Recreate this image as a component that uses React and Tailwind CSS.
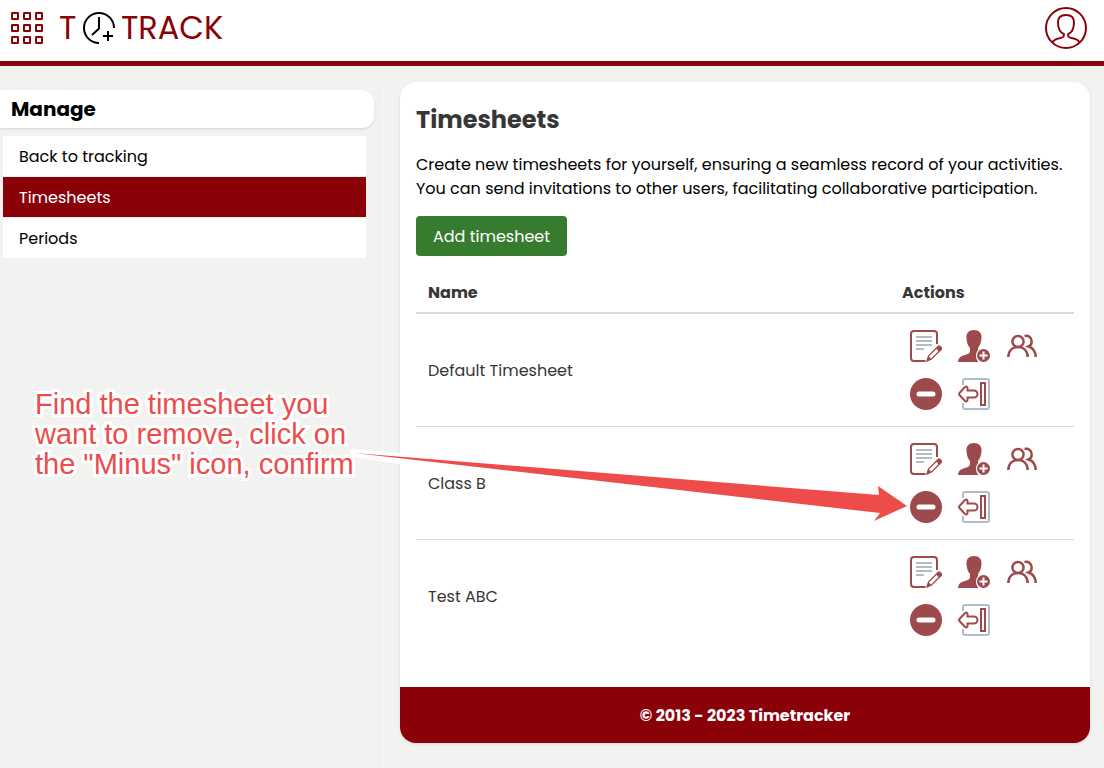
const timesheets = ['Default Timesheet', 'Class B', 'Test ABC'];

const menu = [
  { label: 'Back to tracking', active: false },
  { label: 'Timesheets', active: true },
  { label: 'Periods', active: false },
];

function GridIcon() {
  const cells = [0, 12, 24];
  return (
    <svg width="32" height="32" viewBox="0 0 32 32" fill="none" stroke="#8a0108" strokeWidth="2" aria-hidden="true">
      {cells.map((y) => cells.map((x) => <rect key={`${x}-${y}`} x={x + 1} y={y + 1} width="6" height="6" rx="0.2" />))}
    </svg>
  );
}

function ClockIcon() {
  return (
    <svg width="32" height="32" viewBox="0 0 32 32" fill="none" stroke="#000" strokeWidth="2" aria-hidden="true">
      <path d="M16 31A15 15 0 1 1 31 16" />
      <path d="M16 5v11.500l-7 6.500" />
      <path d="M25 19v10M20 24h10" />
    </svg>
  );
}

function UserIcon() {
  return (
    <svg width="42" height="42" viewBox="0 0 42 42" fill="none" stroke="#8a0108" strokeWidth="2" aria-hidden="true">
      <circle cx="21" cy="21" r="20" />
      <path d="M7.500 35.500c1.500-3 4-3.700 7-4.200c3.500-.6 4.800-1.800 4.300-4.300c-3.800-1.500-5.600-5.500-5.800-11c-.3-5.500 2.500-8 8-8s8.300 2.500 8 8c-.2 5.500-2 9.500-5.800 11c-.5 2.500.8 3.700 4.300 4.300c3 .5 5.500 1.200 7 4.200" />
    </svg>
  );
}

function EditIcon() {
  return (
    <svg width="32" height="32" viewBox="0 0 32 32" fill="none" aria-hidden="true">
      <path d="M15.500 31H4a3 3 0 0 1-3-3V4a3 3 0 0 1 3-3h20a3 3 0 0 1 3 3v10" stroke="#9d4a4d" strokeWidth="2" />
      <path d="M6 7h16M6 11h16M6 15h16M6 19h8" stroke="#aebdc7" strokeWidth="2" />
      <path d="M17 31l1.500-5L28 16.500a1.500 1.500 0 0 1 2 0l1 1a1.500 1.500 0 0 1 0 2L21.500 29L17 31Z" stroke="#9d4a4d" strokeWidth="1.300" />
      <path d="M26 18.500l3.500 3.500l2-2.500a1.500 1.500 0 0 0 0-2l-1-1a1.500 1.500 0 0 0-2 0ZM18.500 26l3 3l-5 2.500Z" fill="#9d4a4d" />
    </svg>
  );
}

function AddUserIcon() {
  return (
    <svg width="32" height="32" viewBox="0 0 32 32" aria-hidden="true">
      <path
        fill="#9d4a4d"
        d="M16 0c5 0 8 3 7.500 8c-.3 4.500-1.800 8-3.500 10v2c-1 1.500-2 3-2 5.500c0 3 1 5 2.500 6.500H0c.2-3 1.500-5 4-6c4-1.500 7.500-2 8-4.500V18c-2-2-3.300-5.500-3.500-10C8 3 11 0 16 0Z"
      />
      <circle cx="25.500" cy="25.500" r="6.500" fill="#9d4a4d" />
      <path d="M25.500 21.500v8M21.500 25.500h8" stroke="#fff" strokeWidth="2" />
    </svg>
  );
}

function UsersIcon() {
  return (
    <svg width="32" height="32" viewBox="0 0 32 32" fill="none" stroke="#9d4a4d" strokeWidth="2.500" aria-hidden="true">
      <circle cx="12" cy="11.500" r="5.600" />
      <path d="M2.300 27c.2-6.300 4.200-10 9.700-10s9.500 3.700 9.700 10" />
      <path d="M18.500 6c4.200-.8 7.200 1.800 7.200 5.400c0 2.300-1.400 4.300-3.200 5.100c4.300 1.200 7 4.800 7.200 10.500" />
    </svg>
  );
}

function RemoveIcon() {
  return (
    <svg width="32" height="32" viewBox="0 0 32 32" aria-hidden="true">
      <circle cx="16" cy="16" r="16" fill="#9d4a4d" />
      <path d="M9 16h14" stroke="#fff" strokeWidth="5" strokeLinecap="round" />
    </svg>
  );
}

function LeaveIcon() {
  return (
    <svg width="32" height="32" viewBox="0 0 32 32" fill="none" strokeWidth="2" aria-hidden="true">
      <path d="M5 7V3a2 2 0 0 1 2-2h22a2 2 0 0 1 2 2v26a2 2 0 0 1-2 2H7a2 2 0 0 1-2-2v-4" stroke="#aebdc7" />
      <rect x="23" y="5" width="4" height="22" stroke="#9d4a4d" />
      <path
        d="M1.500 15l5.500-6c1-.8 2.500-.3 2.500 1v2.500h6.500a3.500 3.500 0 0 1 0 7H9.500V22c0 1.300-1.500 1.800-2.500 1l-5.500-6a1.400 1.400 0 0 1 0-2Z"
        stroke="#9d4a4d"
      />
    </svg>
  );
}

const actions = [
  { label: 'Edit', Icon: EditIcon },
  { label: 'Invite user', Icon: AddUserIcon },
  { label: 'Members', Icon: UsersIcon },
  { label: 'Remove', Icon: RemoveIcon },
  { label: 'Leave', Icon: LeaveIcon },
];

function Header() {
  return (
    <header className="flex h-[66px] items-start justify-between border-b-[5px] border-[#8a0108] bg-white pr-[17px] pl-[11px]">
      <div className="flex items-center pt-2">
        <button type="button" aria-label="Menu" className="mr-4">
          <GridIcon />
        </button>
        <a href="#" className="flex h-10 items-center gap-1 text-[32px] leading-10 text-[#8a0108]">
          <span className="w-5">T</span>
          <ClockIcon />
          <span className="ml-[2px]">TRACK</span>
        </a>
      </div>
      <button type="button" aria-label="Account" className="mt-[7px]">
        <UserIcon />
      </button>
    </header>
  );
}

function Sidebar() {
  return (
    <aside className="mt-4 mr-4 w-[384px] shrink-0 border-r border-[#f6f6f5] pt-2">
      <h2 className="mr-[9px] rounded-r-xl bg-white pl-[11px] text-xl leading-[38px] font-bold text-black shadow">Manage</h2>
      <nav className="mt-2 mr-[17px] ml-[3px] flex flex-col gap-px">
        {menu.map((item) => (
          <a
            key={item.label}
            href="#"
            className={
              item.active ? 'bg-[#8a0108] px-4 pt-[9px] pb-[7px] text-white' : 'bg-white px-4 pt-[9px] pb-[7px] text-black'
            }
          >
            {item.label}
          </a>
        ))}
      </nav>
    </aside>
  );
}

function TimesheetTable() {
  return (
    <table className="mt-4 w-full border-collapse text-left text-[#363636]">
      <thead>
        <tr className="border-b-2 border-[#dbdbdb]">
          <th className="px-3 pt-[9px] pb-[7px] font-bold">Name</th>
          <th className="w-[184px] px-3 pt-[9px] pb-[7px] font-bold">Actions</th>
        </tr>
      </thead>
      <tbody>
        {timesheets.map((name) => (
          <tr key={name} className="border-b border-[#dbdbdb] last:border-b-0">
            <td className="px-3 pt-[9px] pb-[7px]">{name}</td>
            <td className="px-3 py-2">
              <div className="flex flex-wrap">
                {actions.map(({ label, Icon }) => (
                  <button key={label} type="button" aria-label={`${label}: ${name}`} className="p-2">
                    <Icon />
                  </button>
                ))}
              </div>
            </td>
          </tr>
        ))}
      </tbody>
    </table>
  );
}

function Annotation() {
  return (
    <div className="pointer-events-none absolute inset-0">
      <svg className="absolute top-[440px] left-[350px]" width="570" height="90" viewBox="0 0 570 90" aria-hidden="true">
        <path d="M4 13L50 17L50 20Z" stroke="#fff" strokeWidth="8" strokeLinejoin="round" />
        <path d="M4 13L529 55L528 46L557 66L524 81L530 73Z" fill="#ed4c4b" />
      </svg>
      <p className="absolute top-[389px] left-[35px] font-['Liberation_Sans',sans-serif] text-[29px] leading-[30px] whitespace-nowrap text-[#ed4c4b] [-webkit-text-stroke:6px_white] [paint-order:stroke_fill] [stroke-linejoin:round]">
        Find the timesheet you
        <br />
        want to remove, click on
        <br />
        the "Minus" icon, confirm
      </p>
    </div>
  );
}

export default function App() {
  return (
    <div className="relative min-h-screen bg-[#f2f2f0] font-[Poppins,Inter,sans-serif] text-base">
      <Header />
      <div className="flex min-h-[702px] items-stretch">
        <Sidebar />
        <div className="min-w-0 flex-1 pt-4 pr-[14px] pb-6">
          <div className="overflow-hidden rounded-2xl bg-white shadow">
            <main className="px-4 pt-5 pb-[35px]">
              <h1 className="text-2xl leading-9 font-bold text-[#363636]">Timesheets</h1>
              <p className="mt-[15px] leading-6 text-black">
                Create new timesheets for yourself, ensuring a seamless record of your activities. You can send
                invitations to other users, facilitating collaborative participation.
              </p>
              <button type="button" className="mt-[15px] h-10 rounded bg-[#377b2f] px-[17px] pt-px text-white">
                Add timesheet
              </button>
              <TimesheetTable />
            </main>
            <footer className="bg-[#8a0108] pt-[17px] pb-[15px] text-center font-bold text-white">© 2013 - 2023 Timetracker</footer>
          </div>
        </div>
      </div>
      <Annotation />
    </div>
  );
}
